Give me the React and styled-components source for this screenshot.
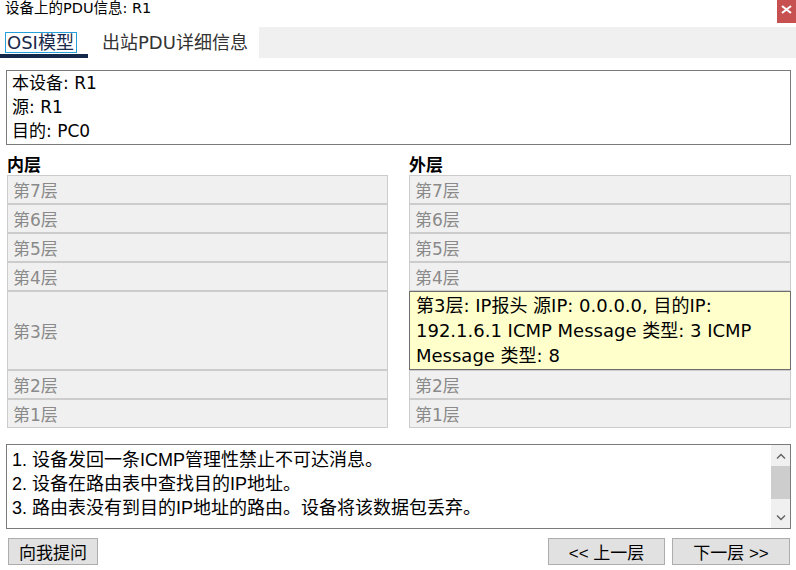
import React from "react";
import { styled, createGlobalStyle } from "styled-components";

const GlobalStyle = createGlobalStyle`
  html, body {
    margin: 0;
    padding: 0;
    background: #ffffff;
  }
  body {
    font-family: "DejaVu Sans", "Noto Sans CJK SC", sans-serif;
    color: #000;
  }
`;

const layers = [7, 6, 5, 4, 3, 2, 1];

const outLayer3 =
  "第3层: IP报头 源IP: 0.0.0.0, 目的IP: 192.1.6.1 ICMP Message 类型: 3 ICMP Message 类型: 8";

const steps = [
  "1. 设备发回一条ICMP管理性禁止不可达消息。",
  "2. 设备在路由表中查找目的IP地址。",
  "3. 路由表没有到目的IP地址的路由。设备将该数据包丢弃。",
];

function Window() {
  return (
    <Frame>
      <TitleBar>
        <Title>设备上的PDU信息: R1</Title>
        <CloseButton>
          <svg width="11" height="9" viewBox="0 0 11 9">
            <path d="M1 1 L10 8 M10 1 L1 8" stroke="#fff" strokeWidth="2.2" />
          </svg>
        </CloseButton>
      </TitleBar>

      <TabBar>
        <Tab $active>
          <TabLabel $active>OSI模型</TabLabel>
        </Tab>
        <Tab>
          <TabLabel>出站PDU详细信息</TabLabel>
        </Tab>
        <TabFiller />
      </TabBar>

      <InfoBox>
        <InfoLine>本设备: R1</InfoLine>
        <InfoLine>源: R1</InfoLine>
        <InfoLine>目的: PC0</InfoLine>
      </InfoBox>

      <Columns>
        <Column>
          <ColumnHead>内层</ColumnHead>
          {layers.map((n) => (
            <LayerRow key={n} $tall={n === 3}>
              第{n}层
            </LayerRow>
          ))}
        </Column>
        <Column>
          <ColumnHead>外层</ColumnHead>
          {layers.map((n) =>
            n === 3 ? (
              <ActiveLayer key={n}>{outLayer3}</ActiveLayer>
            ) : (
              <LayerRow key={n}>第{n}层</LayerRow>
            )
          )}
        </Column>
      </Columns>

      <StepBox>
        <StepList>
          {steps.map((s) => (
            <StepLine key={s}>{s}</StepLine>
          ))}
        </StepList>
        <ScrollBar>
          <ScrollArrow>
            <svg width="10" height="6" viewBox="0 0 10 6">
              <path d="M1 5.5 L5 1.5 L9 5.5" fill="none" stroke="#606060" strokeWidth="1.4" />
            </svg>
          </ScrollArrow>
          <ScrollTrack>
            <ScrollThumb />
          </ScrollTrack>
          <ScrollArrow>
            <svg width="10" height="6" viewBox="0 0 10 6">
              <path d="M1 0.5 L5 4.5 L9 0.5" fill="none" stroke="#606060" strokeWidth="1.4" />
            </svg>
          </ScrollArrow>
        </ScrollBar>
      </StepBox>

      <ButtonRow>
        <Button $w={90}>向我提问</Button>
        <NavGroup>
          <Button $w={117}>&lt;&lt; 上一层</Button>
          <Button $w={118}>下一层 &gt;&gt;</Button>
        </NavGroup>
      </ButtonRow>
    </Frame>
  );
}

export default function App() {
  return (
    <>
      <GlobalStyle />
      <Window />
    </>
  );
}

const Frame = styled.div`
  width: 796px;
  height: 570px;
  display: flex;
  flex-direction: column;
  background: #fff;
  overflow: hidden;
`;

const TitleBar = styled.div`
  height: 23px;
  display: flex;
  align-items: flex-start;
  justify-content: space-between;
`;

const Title = styled.div`
  font-size: 14.5px;
  line-height: 17px;
  padding-left: 5px;
  color: #000;
`;

const CloseButton = styled.div`
  width: 19px;
  height: 23px;
  background: #c75050;
  display: flex;
  align-items: center;
  justify-content: center;
  padding-bottom: 4px;
  box-sizing: border-box;
`;

const TabBar = styled.div`
  margin-top: 4px;
  height: 31px;
  display: flex;
`;

const Tab = styled.div`
  width: ${(p) => (p.$active ? "88px" : "171px")};
  box-sizing: border-box;
  padding: 5px 0 0 ${(p) => (p.$active ? "5px" : "12px")};
  border-bottom: 4px solid ${(p) => (p.$active ? "#14284b" : "#fff")};
`;

const TabLabel = styled.span`
  display: inline-block;
  font-size: 18px;
  line-height: 19px;
  padding: 0 2px 0 1px;
  color: ${(p) => (p.$active ? "#1a2a4c" : "#333")};
  border: 1px solid ${(p) => (p.$active ? "#26a0da" : "transparent")};
`;

const TabFiller = styled.div`
  flex: 1;
  background: #f0f0f0;
`;

const InfoBox = styled.div`
  margin: 12px 5px 0 6px;
  height: 75px;
  box-sizing: border-box;
  border: 1px solid #7a7a7a;
  padding: 0 0 0 5px;
`;

const InfoLine = styled.div`
  font-size: 17px;
  line-height: 24px;
`;

const Columns = styled.div`
  margin: 7px 5px 0 7px;
  display: grid;
  grid-template-columns: 381px 382px;
  column-gap: 21px;
`;

const Column = styled.div`
  display: flex;
  flex-direction: column;
`;

const ColumnHead = styled.div`
  font-size: 17px;
  font-weight: bold;
  line-height: 23px;
  height: 23px;
  font-family: "Noto Sans CJK SC", sans-serif;
`;

const LayerRow = styled.div`
  height: ${(p) => (p.$tall ? "79px" : "29px")};
  box-sizing: border-box;
  background: #f0f0f0;
  border: 1px solid #cccccc;
  display: flex;
  align-items: center;
  padding-left: 5px;
  font-size: 17px;
  color: #8a8a8a;
`;

const ActiveLayer = styled.div`
  height: 79px;
  box-sizing: border-box;
  background: #ffffcc;
  border: 1px solid #6e6e6e;
  padding: 1px 6px 0 6px;
  font-size: 18px;
  line-height: 25px;
  color: #000;
`;

const StepBox = styled.div`
  margin: 16px 5px 0 6px;
  height: 85px;
  box-sizing: border-box;
  border: 1px solid #7a7a7a;
  display: flex;
`;

const StepList = styled.div`
  flex: 1;
  padding: 3px 0 0 5px;
  font-family: "Liberation Sans", "Noto Sans CJK SC", sans-serif;
`;

const StepLine = styled.div`
  font-size: 18px;
  line-height: 24px;
  white-space: nowrap;
`;

const ScrollBar = styled.div`
  width: 19px;
  background: #f0f0f0;
  display: flex;
  flex-direction: column;
`;

const ScrollArrow = styled.div`
  height: 21px;
  display: flex;
  align-items: center;
  justify-content: center;
`;

const ScrollTrack = styled.div`
  flex: 1;
`;

const ScrollThumb = styled.div`
  height: 33px;
  background: #cdcdcd;
`;

const ButtonRow = styled.div`
  margin: 9px 6px 0 8px;
  display: flex;
  justify-content: space-between;
`;

const NavGroup = styled.div`
  display: flex;
  gap: 7px;
`;

const Button = styled.div`
  width: ${(p) => p.$w}px;
  height: 27px;
  box-sizing: border-box;
  background: #e1e1e1;
  border: 1px solid #adadad;
  display: flex;
  align-items: center;
  justify-content: center;
  font-family: "Liberation Sans", "Noto Sans CJK SC", sans-serif;
  font-size: 17px;
  color: #000;
`;
